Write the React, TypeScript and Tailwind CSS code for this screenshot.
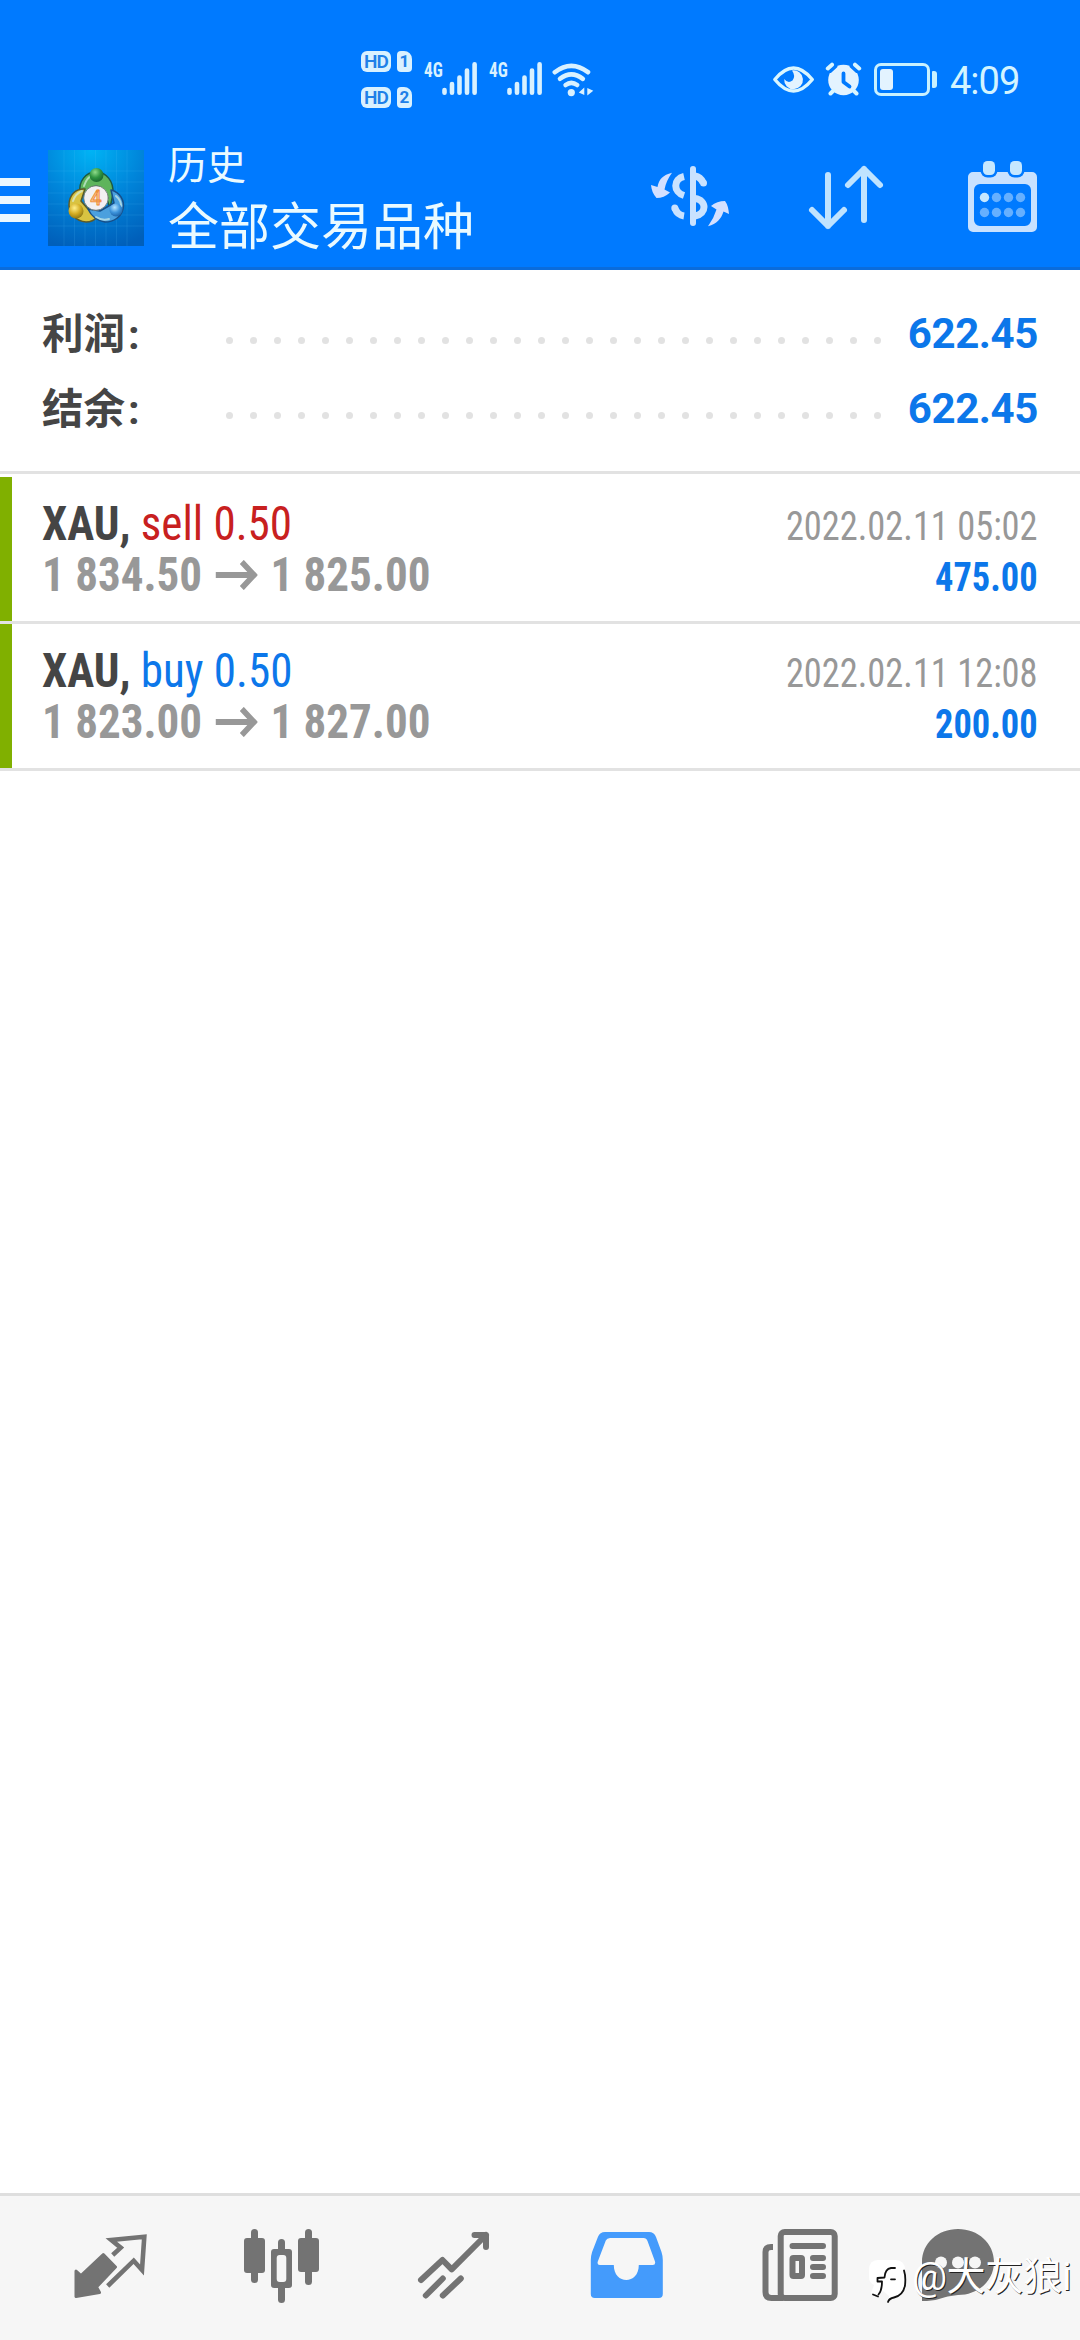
import type { ReactNode } from "react";

type Deal = {
    symbol: string;
    side: "sell" | "buy";
    volume: string;
    open: string;
    close: string;
    time: string;
    profit: string;
};

const deals: Deal[] = [
    {
        symbol: "XAU",
        side: "sell",
        volume: "0.50",
        open: "1 834.50",
        close: "1 825.00",
        time: "2022.02.11 05:02",
        profit: "475.00",
    },
    {
        symbol: "XAU",
        side: "buy",
        volume: "0.50",
        open: "1 823.00",
        close: "1 827.00",
        time: "2022.02.11 12:08",
        profit: "200.00",
    },
];

const summary = [
    { label: "利润", value: "622.45" },
    { label: "结余", value: "622.45" },
];

const Glyph = (props: { box: string; className: string; children: ReactNode }) => (
    <svg
        viewBox={props.box}
        className={`block shrink-0 ${props.className}`}
        fill="none"
        stroke="none"
        strokeLinecap="round"
        strokeLinejoin="round"
    >
        {props.children}
    </svg>
);

const SimBadge = ({ slot }: { slot: string }) => (
    <div className="flex h-[21px] gap-[6px]">
        <span className="flex h-[21px] w-[30px] items-center justify-center rounded-[6px] bg-[#d9f1ff] text-[19px] leading-none font-semibold tracking-[-1px] text-[#2080e8]">
            HD
        </span>
        <span className="flex h-[21px] w-[15px] items-center justify-center rounded-[4px] rounded-tr-[8px] bg-[#d9f1ff] text-[17px] leading-none font-bold text-[#2080e8]">
            {slot}
        </span>
    </div>
);

const Signal = () => (
    <div className="flex h-[33px]">
        <span className="w-[18px] text-[21px] leading-[16px] font-bold text-[#d9f1ff] font-['Roboto_Condensed','Roboto',sans-serif] font-stretch-condensed">
            <span className="inline-block origin-left scale-x-[0.82]">4G</span>
        </span>
        <Glyph box="442 62 35 33" className="h-[33px] w-[35px] text-[#d9f1ff]">
            <path
                d="M444.5 90v2.7M452 84v8.7M459.5 77.5v15.2M467 70.5v22.2M474.6 64.3v28.4"
                stroke="currentColor"
                strokeWidth="4.6"
            />
        </Glyph>
    </div>
);

const StatusBar = () => (
    <div className="flex h-[120px] items-center pt-[39px] pl-[361px]">
        <div className="flex w-[63px] flex-col gap-[15px]">
            <SimBadge slot="1" />
            <SimBadge slot="2" />
        </div>
        <div className="flex gap-[12px] pb-[2px]">
            <Signal />
            <Signal />
        </div>
        <Glyph box="552 61 42 36" className="ml-[10px] h-[36px] w-[42px]">
            <g stroke="#d9f1ff" strokeWidth="4.6">
                <path d="M554.8 71.2Q571.3 58.5 588 71.2" />
                <path d="M560 77.8Q571.3 69 582.8 77.8" />
                <path d="M565.6 84Q571.3 79.6 577.2 84" />
            </g>
            <circle cx="571.3" cy="91.6" r="3.6" fill="#d9f1ff" />
            <path d="M584.3 86.5v7.5l-5.5-2.5zM587.3 94.5v-7.5l6 2.8z" fill="#d9f1ff" />
        </Glyph>
        <Glyph box="772 62 90 36" className="ml-[178px] h-[36px] w-[90px]">
            <path
                d="M774.8 79.5Q793.5 56.5 812.3 79.5Q793.5 102.5 774.8 79.5Z"
                stroke="#d9f6ff"
                strokeWidth="3.4"
            />
            <path
                d="M792 70.5A9.4 9.4 0 1 1 784.2 79Q788 84 792.5 80.5Q796 76 792 70.5Z"
                fill="#e3f3ff"
            />
            <circle cx="843.5" cy="80" r="15.3" fill="#e3f3ff" />
            <path
                d="M827.8 68.5l4.2-3.8M859.2 68.5l-4.2-3.8M830.5 93.5l3-3M856.5 93.5l-3-3"
                stroke="#d9f6ff"
                strokeWidth="4"
            />
            <path d="M830.5 72l6-5.5M856.5 72l-6-5.5" stroke="#007aff" strokeWidth="2" />
            <path d="M843.5 73.5v8.5l6 4.5" stroke="#007aff" strokeWidth="3.8" />
        </Glyph>
        <div className="ml-[12px] flex items-center gap-[2px]">
            <div className="h-[33px] w-[56px] rounded-[7px] border-3 border-[#c9f1ff] p-[3px]">
                <div className="h-[21px] w-[13px] rounded-[3px] bg-[#e3f3ff]" />
            </div>
            <div className="h-[17px] w-[5px] rounded-r-[3px] rounded-l-[1px] bg-[#c9f1ff]" />
        </div>
        <span className="ml-[13px] pt-[3px] text-[38px] leading-none tracking-[-1px] text-[#d3f4ff]">4:09</span>
    </div>
);

const Logo = () => (
    <Glyph box="0 0 96 96" className="mt-[30px] ml-[18px] h-[96px] w-[96px]">
        <defs>
            <radialGradient id="sky" cx="0.45" cy="0" r="1.05">
                <stop offset="0" stopColor="#00b4f5" />
                <stop offset="0.5" stopColor="#0085da" />
                <stop offset="1" stopColor="#005fba" />
            </radialGradient>
            <radialGradient id="green" cx="0.4" cy="0.3" r="0.8">
                <stop offset="0" stopColor="#8fdc8a" />
                <stop offset="0.5" stopColor="#2f9440" />
                <stop offset="1" stopColor="#155a2a" />
            </radialGradient>
            <radialGradient id="gold" cx="0.4" cy="0.3" r="0.8">
                <stop offset="0" stopColor="#fff08a" />
                <stop offset="0.5" stopColor="#d3ac22" />
                <stop offset="1" stopColor="#7c6a12" />
            </radialGradient>
            <radialGradient id="azure" cx="0.4" cy="0.3" r="0.8">
                <stop offset="0" stopColor="#b5e4ff" />
                <stop offset="0.5" stopColor="#3d94dc" />
                <stop offset="1" stopColor="#15579c" />
            </radialGradient>
        </defs>
        <rect width="96" height="96" fill="url(#sky)" />
        <path
            d="M16 0v96M26.5 0v96M37 0v96M47.5 0v96M58 0v96M68.5 0v96M79 0v96M0 21h96M0 32h96M0 43h96M0 54h96M0 65h96M0 76h96"
            stroke="#5cc4ff"
            strokeOpacity="0.14"
        />
        {/* three overlapping figures around the badge */}
        <path
            d="M32 44C30 31 38 22 48 22S66 31 65 44L62 58 57 44Q54 37 48 36Q42 37 38 44Z"
            fill="#5eb45c"
            stroke="#1d5a44"
            strokeWidth="1.5"
        />
        <path
            d="M37 39C27 38 21 46 21 55S28 71 38 72Q45 72 49 67L39 58 33 51Z"
            fill="#d9c341"
            stroke="#5a5a2a"
            strokeWidth="1.5"
        />
        <path
            d="M63 40C72 42 77 51 75 59S66 72 57 72Q45 70 40 59L52 61 66 53Z"
            fill="#4ba0de"
            stroke="#174f88"
            strokeWidth="1.5"
        />
        <path
            d="M36 36Q39 27 45 25M25 51Q27 44 34 41M68 46Q74 51 73 58M48 67Q54 71 61 69"
            stroke="#d9f2e8"
            strokeOpacity="0.65"
            strokeWidth="2"
        />
        <circle cx="48.5" cy="25" r="7" fill="url(#green)" />
        <circle cx="28" cy="61" r="7.5" fill="url(#gold)" />
        <circle cx="68" cy="60" r="6.5" fill="url(#azure)" />
        <circle cx="48" cy="48" r="12.3" fill="#f2f0f2" stroke="#5f6f6a" strokeWidth="0.8" />
        <text
            x="48"
            y="55"
            textAnchor="middle"
            fontSize="20"
            fontWeight="500"
            fill="#fbc08a"
            stroke="#ee8a35"
            strokeWidth="0.8"
            fontFamily="Roboto, sans-serif"
        >
            4
        </text>
    </Glyph>
);

const AppBar = () => (
    <div className="flex h-[150px] border-b-3 border-[#0a6cdc]">
        <div className="flex w-[30px] flex-col gap-[10px] pt-[58px]">
            <div className="h-[8px] bg-[#eaf7ff]" />
            <div className="h-[8px] bg-[#eaf7ff]" />
            <div className="h-[8px] bg-[#eaf7ff]" />
        </div>
        <Logo />
        <div className="w-[484px] pt-[19px] pl-[24px] text-[#eafaff]">
            <p className="text-[39px] leading-[54px]">历史</p>
            <p className="pt-[2px] text-[51px] leading-[66px]">全部交易品种</p>
        </div>
        <Glyph box="628 120 130 147" className="h-[147px] w-[130px]">
            <g stroke="#c9e2ff" strokeWidth="7" strokeLinecap="butt">
                <path d="M684 176.5C673 179 673 192 684 195.5" />
                <path d="M695 176Q700.5 177 703 182.5" />
                <path d="M695 198.5C707 200 707 214 695 216" />
                <path d="M675 208.5Q677.5 215 684 216" />
            </g>
            <circle cx="703.5" cy="183" r="3.5" fill="#c9e2ff" />
            <circle cx="674.8" cy="208" r="3.5" fill="#c9e2ff" />
            <path d="M693 169v54" stroke="#c9e2ff" strokeWidth="6" />
            <path
                d="M672 172.7C663 175 659 179 657.5 187L651 185C651.5 190 653 194 656.5 198Q664 198 670 192.5L664.5 189.5Q666 181 672 172.7Z"
                fill="#d4e0ff"
            />
            <path
                d="M708 226.3C717 224 721 219 723.5 211.5L729 214C728.5 209 728 205 725 201Q717 201 711 206L716.5 209.5Q714 218 708 226.3Z"
                fill="#d4e0ff"
            />
        </Glyph>
        <Glyph box="758 120 176 147" className="h-[147px] w-[176px]">
            <g stroke="#bfe3ff" strokeWidth="6">
                <path d="M828 175v51M812 210l16 16 16-16" />
                <path d="M864 220v-51M848 185l16-16 16 16" />
            </g>
        </Glyph>
        <Glyph box="934 120 146 147" className="h-[147px] w-[146px]">
            <path
                fillRule="evenodd"
                d="M973 172h59a5 5 0 0 1 5 5v50a5 5 0 0 1-5 5h-59a5 5 0 0 1-5-5v-50a5 5 0 0 1 5-5zM980 184a6 6 0 0 0-6 6v30a6 6 0 0 0 6 6h45a6 6 0 0 0 6-6v-30a6 6 0 0 0-6-6z"
                fill="#c9e2ff"
            />
            <rect x="980.5" y="158.5" width="17" height="19" rx="7" fill="#007aff" />
            <rect x="1007.5" y="158.5" width="17" height="19" rx="7" fill="#007aff" />
            <rect x="983" y="161" width="12" height="14" rx="4.5" fill="#c6e8ff" />
            <rect x="1010" y="161" width="12" height="14" rx="4.5" fill="#c6e8ff" />
            <circle cx="984.5" cy="197.5" r="4.7" fill="#c6e8ff" />
            {[996.5, 1008.5, 1020.5].map((x) => (
                <circle key={x} cx={x} cy="197.5" r="4.7" fill="#66b0ff" />
            ))}
            {[984.5, 996.5, 1008.5, 1020.5].map((x) => (
                <circle key={x} cx={x} cy="212.5" r="4.7" fill="#66b0ff" />
            ))}
        </Glyph>
    </div>
);

const SummaryRow = ({ label, value }: { label: string; value: string }) => (
    <div className="flex h-[75px] items-center justify-between font-bold">
        <span className="w-[184px] pt-[4px] text-[41.5px] leading-none text-[#454545]">
            {label}
            <span className="ml-[3px]">:</span>
        </span>
        <div className="flex w-[655px] justify-between pt-[16px]">
            {Array.from({ length: 28 }, (_, i) => (
                <i key={i} className="size-[7px] rounded-full bg-[#e2e2e2]" />
            ))}
        </div>
        <span className="ml-auto pt-[2px] text-[42px] leading-none tracking-[-0.4px] text-[#0c77ea]">{value}</span>
    </div>
);

const DealRow = ({ deal }: { deal: Deal }) => (
    <div className="flex h-[147px] border-b-3 border-[#e2e2e2]">
        <div className="w-[12px] bg-[#80b000]" />
        <div className="flex flex-1 justify-between pt-[21px] pr-[42px] pl-[30px] font-['Roboto_Condensed','Roboto',sans-serif] font-stretch-condensed">
            <div className="origin-left scale-x-[0.938] text-[48px] leading-[51px] font-bold whitespace-nowrap">
                <p className="text-[#454545]">
                    {deal.symbol},{" "}
                    <span className={deal.side === "sell" ? "font-normal text-[#c8201f]" : "font-normal text-[#0c77ea]"}>
                        {deal.side} {deal.volume}
                    </span>
                </p>
                <p className="flex items-center text-[#989898]">
                    {deal.open}
                    <Glyph box="0 0 45 30" className="mx-[14px] h-[30px] w-[45px]">
                        <path
                            d="M0 15h41M28 2l13 13-13 13"
                            stroke="#989898"
                            strokeWidth="6"
                            strokeLinecap="butt"
                            strokeLinejoin="miter"
                        />
                    </Glyph>
                    {deal.close}
                </p>
            </div>
            <div className="origin-right scale-x-[0.91] pt-[3px] text-right text-[40px] leading-[51px]">
                <p className="text-[#989898]">{deal.time}</p>
                <p className="font-bold text-[#0c77ea]">{deal.profit}</p>
            </div>
        </div>
    </div>
);

const TabBar = () => (
    <div className="mt-auto flex h-[147px] border-t-3 border-[#dedede] bg-[#f6f6f6] pl-[24px]">
        <Glyph box="24 2196 172 144" className="h-[144px] w-[172px]">
            <path
                d="M112.7 2255l8-7.3-9.4-7.7 33-3.3-2.3 33.3-8.3-9.3-26 25.3"
                stroke="#737373"
                strokeWidth="4.6"
                strokeLinecap="butt"
                strokeLinejoin="miter"
            />
            <path
                d="M103.3 2254.5L115.5 2267 96.5 2287 99.5 2292.5 76 2296.5V2271L81 2275.5Z"
                fill="#737373"
                stroke="#737373"
                strokeWidth="3"
            />
        </Glyph>
        <Glyph box="196 2196 172 144" className="h-[144px] w-[172px]">
            <g fill="#737373">
                <rect x="251" y="2229" width="7" height="54" rx="3.5" />
                <rect x="244" y="2238" width="21" height="35" rx="3" />
                <rect x="278" y="2239" width="7" height="64" rx="3.5" />
                <rect x="271" y="2249" width="21" height="39" rx="3" />
                <rect x="305" y="2229" width="7" height="56" rx="3.5" />
                <rect x="298" y="2238" width="21" height="34" rx="3" />
            </g>
            <rect x="276.7" y="2255" width="9.6" height="27" rx="3" fill="#f6f6f6" />
        </Glyph>
        <Glyph box="368 2196 172 144" className="h-[144px] w-[172px]">
            <g stroke="#737373" strokeWidth="6">
                <path d="M421 2280l21.5-20 9.2 9.3 34.3-34.3M474.5 2235h11.5v12" />
                <path d="M425.8 2295.5l17-17M442.8 2295.5l18-17" />
            </g>
        </Glyph>
        <Glyph box="540 2196 172 144" className="h-[144px] w-[172px]">
            <path
                fillRule="evenodd"
                d="M605 2232h44q5 0 7 5l5.5 15q1.3 4 1.3 8v34q0 4-4 4h-64q-4 0-4-4v-34q0-4 1.3-8l5.8-15q2-5 7.1-5zM610 2238q-3 0-4.2 2.5l-8 21q-1 3.5 2 3.5h14c0 20 25 20 25 0h14q3 0 2.2-3.5l-7.5-20.5q-1-3-4-3z"
                fill="#449bfc"
            />
        </Glyph>
        <Glyph box="712 2196 172 144" className="h-[144px] w-[172px]">
            <g stroke="#737373" strokeWidth="6" strokeLinecap="butt">
                <rect x="780.7" y="2232" width="54" height="66" rx="4" />
                <path d="M773 2247h-2q-5.5 0-5.5 5v40q0 6 6 6h12" />
                <rect x="792.5" y="2258" width="9.5" height="18" rx="1" />
                <path d="M792.5 2246h30.5M813 2258h10M813 2267h10M813 2276h10" strokeLinecap="round" />
            </g>
        </Glyph>
        <Glyph box="884 2196 172 144" className="h-[144px] w-[172px]">
            <path
                d="M922 2301v-39C922 2243 938 2229 958 2229S994 2243 994 2262 978 2295 958 2295Q947 2296 939 2299 932 2301 922 2301Z"
                fill="#737373"
            />
            <circle cx="941" cy="2262.5" r="6" fill="#f6f6f6" />
            <circle cx="958" cy="2262.5" r="6" fill="#f6f6f6" />
            <circle cx="975" cy="2262.5" r="6" fill="#f6f6f6" />
        </Glyph>
    </div>
);

const Watermark = () => (
    <div className="absolute top-[2251px] left-[866px] flex items-center">
        <Glyph box="866 2251 46 52" className="h-[52px] w-[46px]">
            <path
                d="M878 2260h17q10 0 10 10v13q0 11-10 13l-6 6v-6l-6-5-5 4-7-2 3-8q-5-2-5-8v-7q0-10 9-10z"
                fill="#fff"
            />
            <path
                d="M904 2270.5q2 6 1 15-2 10-11 12-5 1-6 4.5M873 2294.5l5 2M891 2279.3h4"
                stroke="#111"
                strokeWidth="1.8"
            />
            <path d="M895 2268h-4q-6 1-6.5 9.5l-7 .5v3.5h4.5q0 9-3.5 13" stroke="#111" strokeWidth="1.8" />
        </Glyph>
        <span className="text-[39px] leading-[50px] whitespace-nowrap text-white tracking-[-0.5px] [text-shadow:1px_1px_0_#222]">
            @大灰狼i
        </span>
    </div>
);

const App = () => (
    <div className="relative flex h-[2340px] w-[1080px] flex-col overflow-hidden bg-white font-['Roboto','Noto_Sans_CJK_SC',sans-serif]">
        <header className="bg-[#007aff]">
            <StatusBar />
            <AppBar />
        </header>
        <section className="mb-[3px] h-[204px] border-b-3 border-[#e2e2e2] pt-[25px] pr-[42px] pl-[42px]">
            {summary.map((row) => (
                <SummaryRow key={row.label} {...row} />
            ))}
        </section>
        {deals.map((deal) => (
            <DealRow key={deal.time} deal={deal} />
        ))}
        <TabBar />
        <Watermark />
    </div>
);

export default App;
